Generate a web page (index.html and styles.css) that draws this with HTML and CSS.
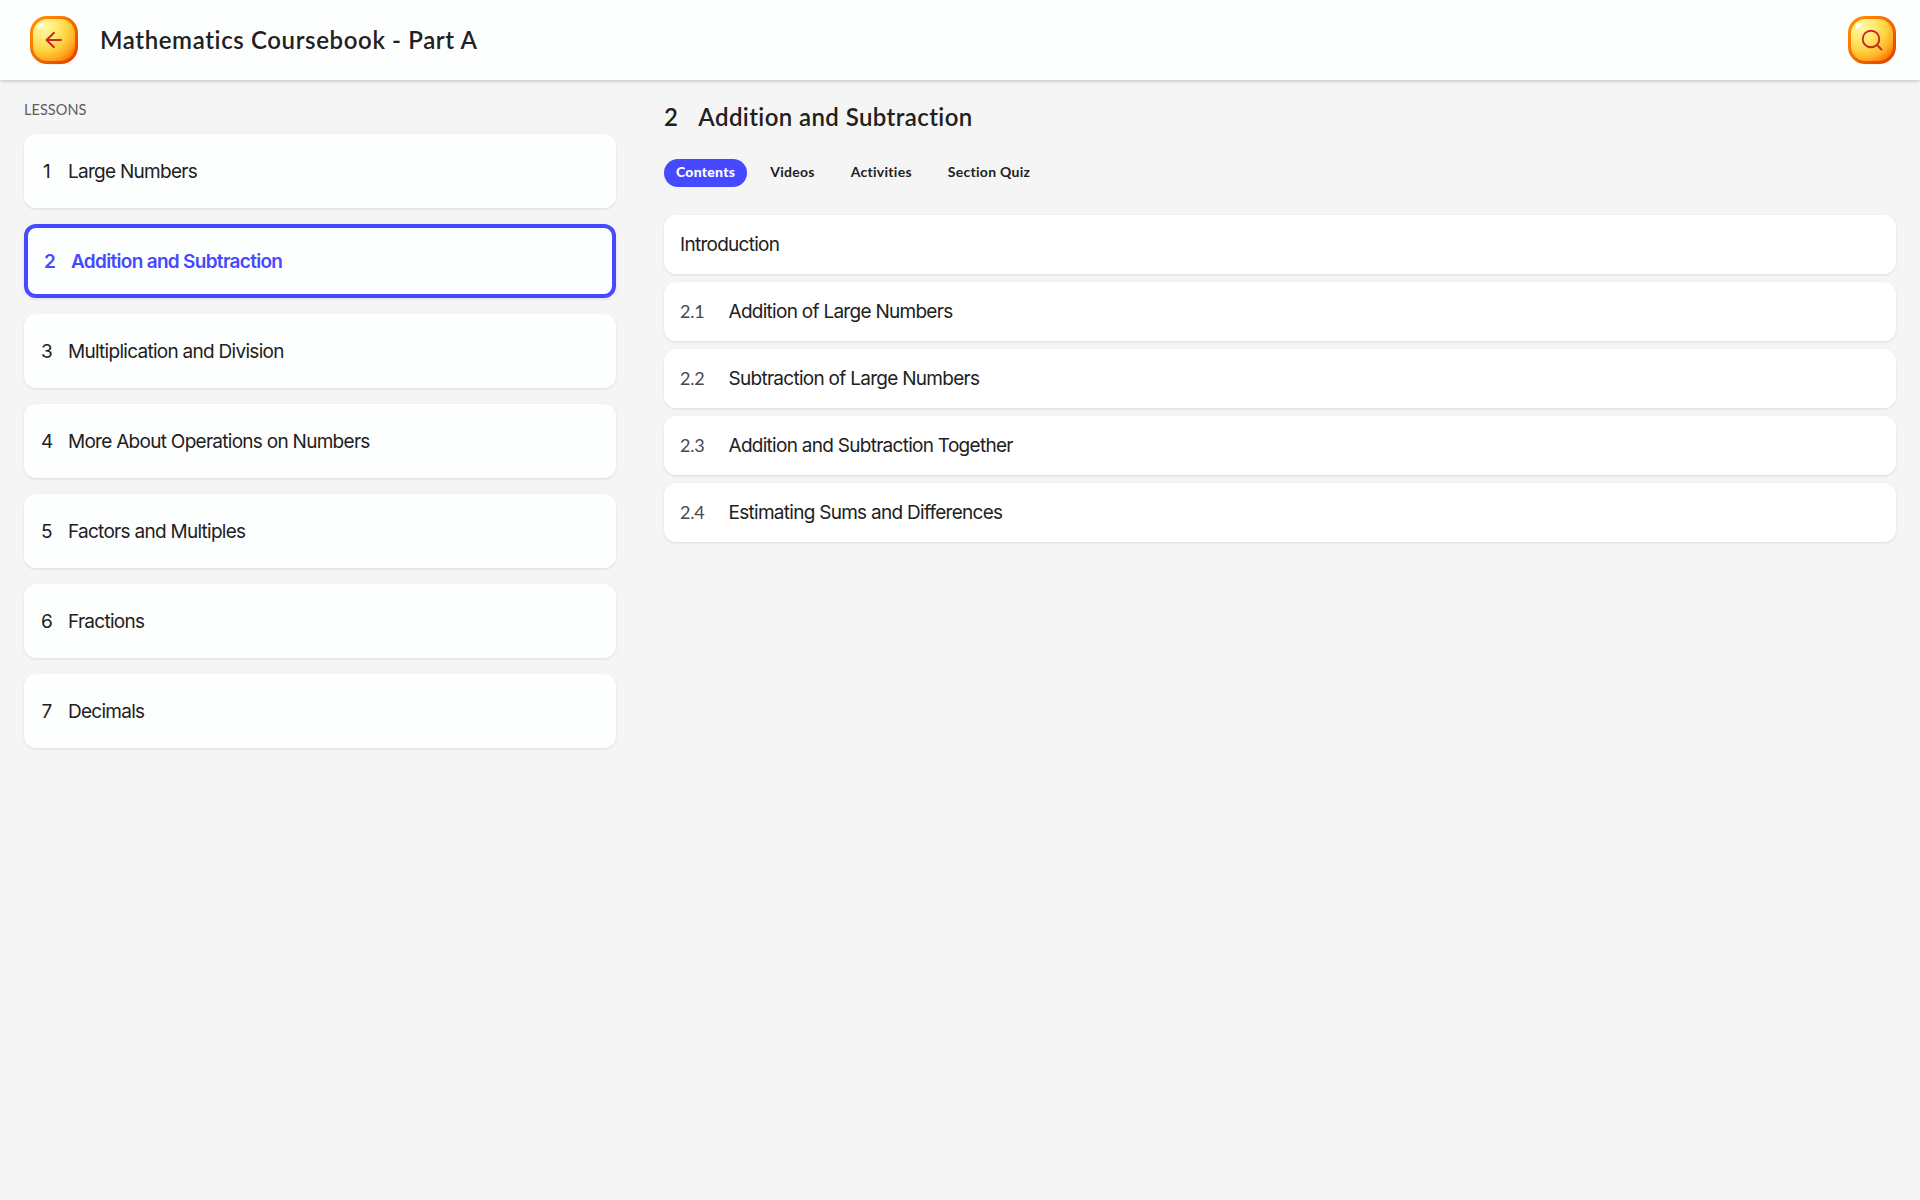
FILE: index.html
```html
<!DOCTYPE html>
<html lang="en">
<head>
<meta charset="utf-8">
<title>Mathematics Coursebook - Part A</title>
<link rel="stylesheet" href="styles.css">
</head>
<body>
<header class="topbar">
  <button class="icon-btn" aria-label="Back">
    <svg width="52" height="52" viewBox="0 0 52 52">
      <defs>
        <linearGradient id="rim" x1="0" y1="0" x2="1" y2="1"><stop offset="0" stop-color="#ff9800"/><stop offset=".5" stop-color="#f66a00"/><stop offset="1" stop-color="#e23a00"/></linearGradient>
        <radialGradient id="face" cx=".27" cy=".2" r=".93"><stop offset="0" stop-color="#fff8a6"/><stop offset=".3" stop-color="#ffec75"/><stop offset=".6" stop-color="#ffd342"/><stop offset=".82" stop-color="#ffad24"/><stop offset="1" stop-color="#ff7800"/></radialGradient>
      </defs>
      <path class="halo" d="M26 3C43 3 49 9 49 27S43 51 26 51 3 45 3 27 9 3 26 3z"/>
      <rect x="2" y="2" width="48" height="48" rx="17" fill="url(#rim)"/>
      <rect x="5" y="5" width="42" height="42" rx="14.500" fill="url(#face)"/>
      <path class="shine" d="M10.800 13.200Q11.200 11.500 13.800 10.500"/>
      <path class="glyph" d="M33 26H18.500M26 18.700 18.500 26l7.500 7.300"/>
    </svg>
  </button>
  <h1 class="title">Mathematics Coursebook - Part A</h1>
  <button class="icon-btn" aria-label="Search">
    <svg width="52" height="52" viewBox="0 0 52 52">
      <path class="halo" d="M26 3C43 3 49 9 49 27S43 51 26 51 3 45 3 27 9 3 26 3z"/>
      <rect x="2" y="2" width="48" height="48" rx="17" fill="url(#rim)"/>
      <rect x="5" y="5" width="42" height="42" rx="14.500" fill="url(#face)"/>
      <path class="shine" d="M10.800 13.200Q11.200 11.500 13.800 10.500"/>
      <circle class="glyph" cx="25" cy="25" r="8.300"/>
      <path class="glyph" d="M31 31l4.500 4.500"/>
    </svg>
  </button>
</header>
<main class="layout">
  <nav class="lessons">
    <h2 class="label">LESSONS</h2>
    <a class="lesson"><span class="num">1</span><span>Large Numbers</span></a>
    <a class="lesson active"><span class="num">2</span><span>Addition and Subtraction</span></a>
    <a class="lesson"><span class="num">3</span><span>Multiplication and Division</span></a>
    <a class="lesson"><span class="num">4</span><span>More About Operations on Numbers</span></a>
    <a class="lesson"><span class="num">5</span><span>Factors and Multiples</span></a>
    <a class="lesson"><span class="num">6</span><span>Fractions</span></a>
    <a class="lesson"><span class="num">7</span><span>Decimals</span></a>
  </nav>
  <section class="content">
    <h2 class="heading"><span>2</span><span>Addition and Subtraction</span></h2>
    <div class="tabs">
      <a class="tab selected">Contents</a>
      <a class="tab">Videos</a>
      <a class="tab">Activities</a>
      <a class="tab">Section Quiz</a>
    </div>
    <div class="sections">
      <a class="section">Introduction</a>
      <a class="section"><span class="index">2.1</span><span>Addition of Large Numbers</span></a>
      <a class="section"><span class="index">2.2</span><span>Subtraction of Large Numbers</span></a>
      <a class="section"><span class="index">2.3</span><span>Addition and Subtraction Together</span></a>
      <a class="section"><span class="index">2.4</span><span>Estimating Sums and Differences</span></a>
    </div>
  </section>
</main>
</body>
</html>
```
FILE: styles.css
```css
* { box-sizing: border-box; }
body {
  margin: 0;
  min-height: 100vh;
  background: #f5f5f5;
  color: #212121;
  font-family: Inter, "Liberation Sans", sans-serif;
}
h1, h2 { margin: 0; }
.topbar {
  display: flex;
  align-items: center;
  height: 80px;
  padding: 0 22px 0 28px;
  background: #fdfefe;
  box-shadow: 0 1px 4px rgba(0, 0, 0, .22);
}
.icon-btn { width: 52px; height: 52px; padding: 0; border: 0; background: none; }
.icon-btn svg { display: block; }
.halo { fill: #000; opacity: .06; }
.shine { fill: none; stroke: #fff; stroke-width: 3; stroke-linecap: round; }
.glyph { fill: none; stroke: #c62828; stroke-width: 1.9; stroke-linecap: round; stroke-linejoin: round; }
.title {
  flex: 1;
  margin-left: 20px;
  padding-bottom: 1px;
  font: 600 24px/31px Lato, sans-serif;
  letter-spacing: .62px;
}
.layout {
  display: grid;
  grid-template-columns: 592px 1fr;
  column-gap: 48px;
  padding: 20px 24px;
}
.lessons { display: flex; flex-direction: column; gap: 16px; }
.label {
  height: 18px;
  font: 400 14.5px/20px Lato, sans-serif;
  letter-spacing: .05px;
  color: #5c5c5c;
}
.lesson {
  display: flex;
  align-items: center;
  gap: 16px;
  height: 74px;
  padding: 0 17px;
  border-radius: 12px;
  background: #fdfefe;
  box-shadow: 0 1px 3px rgba(0, 0, 0, .1);
  font-size: 19px;
  font-weight: 400;
  letter-spacing: -.72px;
}
.num { width: 11px; text-align: center; }
.active {
  border: 4px solid #4549ff;
  color: #4549ff;
  font-weight: 600;
  letter-spacing: -.69px;
  padding: 0 16px;
}
.heading {
  display: flex;
  gap: 20px;
  font: 600 24px/34px Lato, sans-serif;
  letter-spacing: .4px;
}
.tabs { display: flex; margin-top: 25px; }
.tab {
  height: 28px;
  margin-right: 12px;
  padding: 0 12px;
  border-radius: 14px;
  font: 700 14px/26px Lato, sans-serif;
  letter-spacing: .27px;
}
.selected { margin-right: 11px; background: #4549ff; color: #fff; font-weight: 900; }
.sections { display: grid; gap: 8px; margin-top: 28px; }
.section {
  display: flex;
  align-items: center;
  height: 59px;
  padding: 0 16px;
  border-radius: 12px;
  background: #fff;
  box-shadow: 0 1px 3px rgba(0, 0, 0, .1);
  font-size: 19px;
  font-weight: 400;
  letter-spacing: -.72px;
}
.index {
  width: 48.5px;
  padding-bottom: 2px;
  font: 400 18px Lato, sans-serif;
  letter-spacing: -.2px;
  color: #4a4a4a;
}
```
